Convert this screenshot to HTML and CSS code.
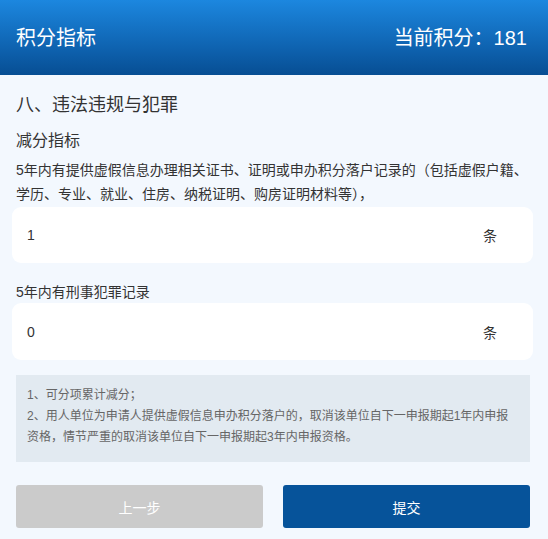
FILE: index.html
```html
<!DOCTYPE html>
<html lang="zh-CN">
<head>
<meta charset="utf-8">
<title>积分指标</title>
<link rel="stylesheet" href="styles.css">
</head>
<body>
<header class="topbar">
  <h1 class="topbar-title">积分指标</h1>
  <div class="topbar-score">当前积分：181</div>
</header>
<main class="content">
  <h2 class="section-title">八、违法违规与犯罪</h2>
  <h3 class="sub-title">减分指标</h3>
  <p class="item-desc">5年内有提供虚假信息办理相关证书、证明或申办积分落户记录的（包括虚假户籍、学历、专业、就业、住房、纳税证明、购房证明材料等），</p>
  <div class="field-card">
    <div class="field-input">1</div>
    <div class="field-unit">条</div>
  </div>
  <p class="item-label">5年内有刑事犯罪记录</p>
  <div class="field-card">
    <div class="field-input">0</div>
    <div class="field-unit">条</div>
  </div>
  <div class="notes">
    <p>1、可分项累计减分；</p>
    <p>2、用人单位为申请人提供虚假信息申办积分落户的，取消该单位自下一申报期起1年内申报资格，情节严重的取消该单位自下一申报期起3年内申报资格。</p>
  </div>
  <div class="actions">
    <button class="btn btn-prev" type="button">上一步</button>
    <button class="btn btn-submit" type="button">提交</button>
  </div>
</main>
</body>
</html>
```
FILE: styles.css
```css
* { box-sizing: border-box; }
html, body {
  margin: 0;
  padding: 0;
  background: #f3f8fe;
  font-family: "Liberation Sans", "Noto Sans CJK SC", sans-serif;
  color: #333;
}
.topbar {
  height: 75px;
  background: linear-gradient(to bottom, #1c87df 0%, #0d5fab 70%, #074e93 100%);
  display: flex;
  align-items: center;
  justify-content: space-between;
  padding: 0 21px 0 16px;
  color: #fff;
}
.topbar-title {
  margin: 0;
  font-size: 20px;
  font-weight: normal;
  line-height: 28px;
}
.topbar-score {
  font-size: 20px;
  line-height: 28px;
}
.content {
  padding: 18px 0 0 0;
}
.section-title {
  margin: 0 16px;
  font-size: 18px;
  font-weight: normal;
  line-height: 24px;
  color: #333;
}
.sub-title {
  margin: 12px 16px 0;
  font-size: 16px;
  font-weight: normal;
  line-height: 24px;
  color: #333;
}
.item-desc {
  margin: 5px 16px 0;
  font-size: 14px;
  line-height: 24px;
  color: #333;
}
.field-card {
  margin: 1px 15px 0 12px;
  height: 56px;
  background: #fff;
  border-radius: 9px;
  display: flex;
  align-items: center;
  padding: 0 36px 0 15px;
  font-size: 14px;
  color: #333;
}
.field-input {
  flex: 1;
}
.field-unit {
  font-size: 14px;
}
.item-label {
  margin: 18px 16px 0;
  font-size: 14px;
  line-height: 22px;
  color: #333;
}
.item-label + .field-card {
  margin-top: 0;
  height: 57px;
}
.notes {
  margin: 15px 18px 0 16px;
  background: #e2eaf1;
  padding: 10px 12px 14px 11px;
  font-size: 12px;
  line-height: 21px;
  color: #666;
}
.notes p {
  margin: 0;
}
.actions {
  margin: 23px 18px 0 16px;
  display: flex;
  gap: 20px;
}
.btn {
  flex: 1;
  height: 43px;
  border: none;
  border-radius: 3px;
  font-family: "Liberation Sans", "Noto Sans CJK SC", sans-serif;
  font-size: 14px;
  color: #fff;
}
.btn-prev {
  background: #cbcbcb;
}
.btn-submit {
  background: #06539a;
}
```
